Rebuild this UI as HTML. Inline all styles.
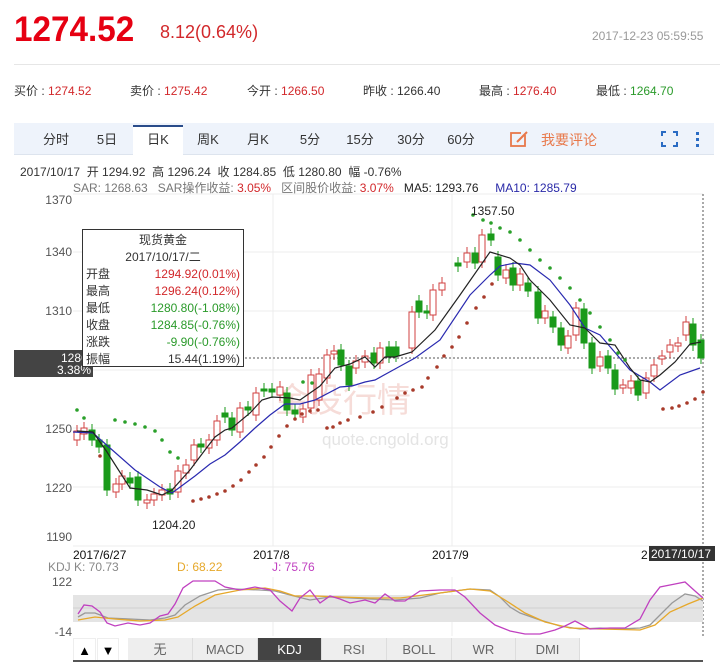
<!DOCTYPE html>
<html><head><meta charset="utf-8"><style>
*{margin:0;padding:0;box-sizing:border-box}
body{width:720px;height:662px;background:#fff;font-family:"Liberation Sans","Noto Sans CJK SC",sans-serif;position:relative;overflow:hidden;color:#333}
.a{position:absolute;white-space:nowrap}
.r{color:#d2282b}.g{color:#2a9a2a}
.tab{position:absolute;top:124px;height:31px;line-height:31px;font-size:13px;color:#333;text-align:center;width:50px}
.bt{position:absolute;top:638px;height:24px;line-height:24px;font-size:13px;text-align:center;background:#eee;color:#666;border-right:1px solid #ddd}
</style></head><body>
<div class="a" style="left:14px;top:10px;font-size:35px;font-weight:bold;color:#e60012;transform:scaleX(0.95);transform-origin:left">1274.52</div>
<div class="a" style="left:160px;top:22px;font-size:18px;color:#d2282b">8.12(0.64%)</div>
<div class="a" style="left:592px;top:29px;font-size:12px;color:#999">2017-12-23 05:59:55</div>
<div class="a" style="left:14px;top:64px;width:706px;height:1px;background:#e6e6e6"></div>
<div class="a" style="left:14px;top:82px;font-size:12px">买价 : <span class="r">1274.52</span></div>
<div class="a" style="left:130px;top:82px;font-size:12px">卖价 : <span class="r">1275.42</span></div>
<div class="a" style="left:247px;top:82px;font-size:12px">今开 : <span class="r">1266.50</span></div>
<div class="a" style="left:363px;top:82px;font-size:12px">昨收 : 1266.40</div>
<div class="a" style="left:479px;top:82px;font-size:12px">最高 : <span class="r">1276.40</span></div>
<div class="a" style="left:596px;top:82px;font-size:12px">最低 : <span class="g">1264.70</span></div>
<div class="a" style="left:14px;top:123px;width:700px;height:32px;background:#eef3fb;border-bottom:1px solid #dde4ee"></div>
<div class="a" style="left:133px;top:125px;width:50px;height:31px;background:#fff;border-top:2px solid #2a4c8a"></div>
<div class="tab" style="left:31px">分时</div><div class="tab" style="left:82px">5日</div><div class="tab" style="left:133px">日K</div><div class="tab" style="left:183px">周K</div><div class="tab" style="left:233px">月K</div><div class="tab" style="left:285px">5分</div><div class="tab" style="left:335px">15分</div><div class="tab" style="left:386px">30分</div><div class="tab" style="left:436px">60分</div>
<svg class="a" style="left:509px;top:129px" width="20" height="20"><rect x="2" y="4" width="14" height="13" fill="none" stroke="#e8784a" stroke-width="1.8"/><rect x="12" y="1" width="8" height="5" fill="#eef3fb"/><path d="M8 13 L18 3" stroke="#e8784a" stroke-width="2"/></svg>
<div class="a" style="left:541px;top:130px;font-size:14px;color:#e8784a">我要评论</div>
<svg class="a" style="left:661px;top:131px" width="50" height="16"><path d="M1 5V1H5M12 1H16V5M16 11V15H12M5 15H1V11" fill="none" stroke="#2b6cc4" stroke-width="2"/><rect x="35" y="1" width="3" height="3" fill="#2b6cc4"/><rect x="35" y="7" width="3" height="3" fill="#2b6cc4"/><rect x="35" y="13" width="3" height="3" fill="#2b6cc4"/></svg>
<div class="a" style="left:20px;top:163px;font-size:12px">2017/10/17 &nbsp;开 1294.92 &nbsp;高 1296.24 &nbsp;收 1284.85 &nbsp;低 1280.80 &nbsp;幅 -0.76%</div>
<div class="a" style="left:73px;top:179px;font-size:12px;color:#777">SAR: 1268.63 &nbsp;&nbsp;SAR操作收益: <span class="r">3.05%</span> &nbsp;&nbsp;区间股价收益: <span class="r">3.07%</span> &nbsp;&nbsp;<span style="color:#222">MA5: 1293.76</span> &nbsp;&nbsp;&nbsp;&nbsp;<span style="color:#2a2aa8">MA10: 1285.79</span></div>

<svg class="a" style="left:0;top:0" width="720" height="662" id="ch">
<g stroke="#ececec" stroke-width="1">
<line x1="73" y1="194" x2="703" y2="194"/><line x1="73" y1="252" x2="703" y2="252"/><line x1="73" y1="311" x2="703" y2="311"/><line x1="73" y1="370" x2="703" y2="370"/><line x1="73" y1="428" x2="703" y2="428"/><line x1="73" y1="487" x2="703" y2="487"/><line x1="73" y1="546" x2="703" y2="546"/>
<line x1="273" y1="194" x2="273" y2="546"/><line x1="452" y1="194" x2="452" y2="546"/>
<line x1="273" y1="577" x2="273" y2="636"/><line x1="452" y1="577" x2="452" y2="636"/>
</g>
<text x="275" y="412" font-size="34" fill="#f6dcd8" font-family="Noto Sans CJK SC,sans-serif">金投行情</text>
<text x="322" y="445" font-size="17" fill="#e4e4e4" font-family="Liberation Sans,sans-serif">quote.cngold.org</text>
<line x1="703" y1="194" x2="703" y2="636" stroke="#555" stroke-dasharray="2,2"/>
<line x1="93" y1="358" x2="703" y2="358" stroke="#555" stroke-dasharray="2,2"/>
<g id="cd"></g>
<polyline fill="none" stroke="#2a2ab0" stroke-width="1.2" points="73,432 93,433 110,448 135,470 160,487 172,493 195,476 210,464 225,455 240,442 255,428 270,415 285,404 300,404 315,400 340,387 352,386 365,382 375,380 395,369 415,358 440,340 470,295 490,275 500,266 515,263 530,265 550,280 570,305 585,328 600,335 630,370 650,382 660,390 680,375 700,368"/>
<polyline fill="none" stroke="#222" stroke-width="1.2" points="77,431 93,432 107,452 130,488 147,490 162,495 172,490 190,470 205,450 215,437 225,430 232,428 250,413 262,400 272,397 290,398 300,400 310,393 320,386 335,368 350,364 365,357 375,367 385,357 395,357 412,352 435,330 460,295 490,252 510,258 520,265 530,280 550,300 570,325 585,328 600,343 615,345 630,368 640,380 650,382 660,375 675,362 690,344 701,342"/>
<g id="dt"></g>
<text x="471" y="215" font-size="12" fill="#222">1357.50</text>
<text x="152" y="529" font-size="12" fill="#222">1204.20</text>
<g font-size="12" fill="#555" text-anchor="end"><text x="72" y="204">1370</text><text x="72" y="256">1340</text><text x="72" y="315">1310</text><text x="72" y="433">1250</text><text x="72" y="492">1220</text><text x="72" y="541">1190</text>
<text x="72" y="586">122</text><text x="72" y="636">-14</text></g>
<g font-size="12" fill="#111"><text x="73" y="559">2017/6/27</text><text x="253" y="559">2017/8</text><text x="432" y="559">2017/9</text><text x="641" y="559">2</text></g>
<rect x="649" y="546" width="66" height="15" fill="#333"/><text x="651" y="558" font-size="12" fill="#fff">2017/10/17</text>
<text x="48" y="571" font-size="12" fill="#888">KDJ  K: 70.73</text>
<text x="177" y="571" font-size="12" fill="#e6a82a">D: 68.22</text>
<text x="272" y="571" font-size="12" fill="#c040c0">J: 75.76</text>
<rect x="73" y="595" width="630" height="27" fill="#e4e4e4"/>
<line x1="73" y1="608" x2="703" y2="608" stroke="#d0d0d0"/>
<polyline fill="none" stroke="#999" stroke-width="1.3" points="78,617 85,613 95,613 108,618 130,619 150,620 165,618 175,615 185,605 200,596 218,590 235,589 260,590 275,591 290,595 310,600 330,597 350,598 370,599 395,600 420,598 440,593 470,589 490,590 500,597 510,607 520,613 540,620 560,626 580,629 600,628 620,629 640,628 650,625 660,615 672,603 685,594 695,596 703,601"/>
<polyline fill="none" stroke="#e6a82a" stroke-width="1.3" points="78,620 95,617 115,619 140,621 165,620 178,617 195,606 215,595 240,590 265,588 280,591 295,596 315,596 340,597 370,598 400,598 440,593 470,589 490,591 505,600 525,613 545,622 570,628 600,629 640,630 655,625 670,612 688,604 703,598"/>
<polyline fill="none" stroke="#c040c0" stroke-width="1.3" points="78,614 84,605 92,606 100,612 107,623 115,626 128,623 140,625 150,623 160,616 168,614 175,604 183,588 193,581 215,581 225,587 240,590 255,587 270,590 280,601 292,611 300,598 310,590 320,603 330,596 340,599 350,603 365,600 375,603 385,594 395,601 405,601 420,591 440,590 455,590 465,597 480,613 495,625 510,631 525,634 540,634 555,630 565,626 575,621 590,629 610,628 625,628 640,619 650,600 660,587 675,584 685,582 695,591 703,598"/>
</svg>

<div class="a" style="left:14px;top:350px;width:79px;height:27px;background:#444;color:#fff;font-size:12px;line-height:12px;text-align:right;padding:2px 2px 0 0">1286.<br>3.38%</div>
<div class="a" style="left:82px;top:229px;width:162px;height:138px;background:#fff;border:1px solid #333;font-size:12px;line-height:17px;padding:2px 3px">
<div style="text-align:center">现货黄金</div><div style="text-align:center">2017/10/17/二</div>
<div>开盘<span class="r" style="float:right">1294.92(0.01%)</span></div>
<div>最高<span class="r" style="float:right">1296.24(0.12%)</span></div>
<div>最低<span class="g" style="float:right">1280.80(-1.08%)</span></div>
<div>收盘<span class="g" style="float:right">1284.85(-0.76%)</span></div>
<div>涨跌<span class="g" style="float:right">-9.90(-0.76%)</span></div>
<div>振幅<span style="float:right">15.44(1.19%)</span></div>
</div>
<div class="bt" style="left:73px;width:23px;background:#fff;color:#000;border:1px solid #eee">▲</div>
<div class="bt" style="left:97px;width:22px;background:#fff;color:#000;border:1px solid #eee">▼</div>
<div class="bt" style="left:128px;width:65px">无</div><div class="bt" style="left:193px;width:65px">MACD</div><div class="bt" style="left:258px;width:64px;background:#444;color:#fff">KDJ</div><div class="bt" style="left:322px;width:65px">RSI</div><div class="bt" style="left:387px;width:65px">BOLL</div><div class="bt" style="left:452px;width:64px">WR</div><div class="bt" style="left:516px;width:64px">DMI</div>
<div class="a" style="left:73px;top:660px;width:630px;height:2px;background:#555"></div>
<script>
var C=[[77,431,440,'r'],[84,428,434,'r'],[92,430,440,'g'],[99,440,447,'g'],[107,445,490,'g'],[116,484,492,'r'],[122,476,484,'r'],[130,478,483,'g'],[138,477,500,'g'],[147,500,503,'r'],[154,494,500,'r'],[162,490,495,'r'],[170,489,494,'g'],[178,471,492,'r'],[186,465,473,'r'],[194,445,460,'r'],[201,444,447,'g'],[209,440,448,'r'],[217,421,440,'r'],[225,413,417,'g'],[232,418,430,'g'],[240,408,432,'r'],[248,407,410,'g'],[256,393,415,'r'],[264,389,391,'g'],[272,389,392,'g'],[280,387,395,'r'],[287,393,410,'g'],[295,410,414,'g'],[303,409,417,'r'],[311,375,408,'r'],[319,374,400,'r'],[327,355,378,'r'],[334,351,354,'r'],[341,350,365,'g'],[349,366,385,'g'],[356,361,368,'r'],[365,356,362,'r'],[374,353,363,'g'],[380,348,363,'r'],[389,347,357,'g'],[396,347,356,'g'],[412,312,348,'r'],[419,301,312,'g'],[427,311,313,'g'],[433,290,315,'r'],[442,283,290,'r'],[458,263,266,'g'],[467,253,262,'r'],[475,253,263,'g'],[482,235,262,'r'],[491,234,240,'g'],[498,257,275,'g'],[506,270,278,'r'],[513,268,285,'g'],[520,274,285,'r'],[528,283,291,'g'],[538,292,318,'g'],[545,311,318,'r'],[553,317,327,'g'],[561,328,345,'g'],[568,336,348,'r'],[576,308,335,'r'],[584,309,343,'g'],[592,343,368,'g'],[600,357,366,'r'],[608,356,368,'g'],[615,370,389,'g'],[623,385,388,'r'],[631,381,388,'r'],[638,381,395,'g'],[646,378,393,'r'],[654,365,376,'r'],[662,356,359,'r'],[670,345,352,'r'],[678,343,346,'r'],[686,322,335,'r'],[693,324,345,'g'],[701,340,358,'g']];
var s='';C.forEach(function(c){var col=c[3]=='r'?'#d04040':'#1a9a1a';s+='<line x1="'+c[0]+'" y1="'+(c[1]-6)+'" x2="'+c[0]+'" y2="'+(c[2]+6)+'" stroke="'+col+'"/>';s+='<rect x="'+(c[0]-3)+'" y="'+c[1]+'" width="6" height="'+Math.max(2,c[2]-c[1])+'" fill="'+(c[3]=='r'?'#fff':col)+'" stroke="'+col+'"/>';});
document.getElementById('cd').innerHTML=s;
var G=[[77,410],[84,418],[115,420],[125,422],[135,424],[145,427],[155,431],[162,440],[170,452],[178,458],[303,382],[312,383],[473,215],[483,220],[491,223],[500,228],[510,232],[520,240],[530,250],[540,260],[550,268],[560,278],[570,288],[580,300],[590,313],[600,327],[610,340],[618,353],[625,360]];
var R=[[100,456],[193,501],[201,499],[209,497],[217,494],[225,491],[233,486],[241,480],[249,472],[256,465],[264,457],[271,447],[279,436],[287,426],[295,419],[302,414],[310,411],[318,410],[327,428],[333,427],[340,423],[348,420],[360,417],[373,412],[382,407],[397,398],[405,393],[413,390],[422,387],[428,378],[437,367],[444,356],[452,347],[459,337],[467,323],[476,308],[484,297],[492,284],[663,409],[672,408],[679,406],[687,403],[695,399],[703,392]];
var t='';G.forEach(function(p){t+='<circle cx="'+p[0]+'" cy="'+p[1]+'" r="1.8" fill="#2aa02a"/>'});R.forEach(function(p){t+='<circle cx="'+p[0]+'" cy="'+p[1]+'" r="1.8" fill="#a83a2a"/>'});
document.getElementById('dt').innerHTML=t;
</script>
</body></html>
